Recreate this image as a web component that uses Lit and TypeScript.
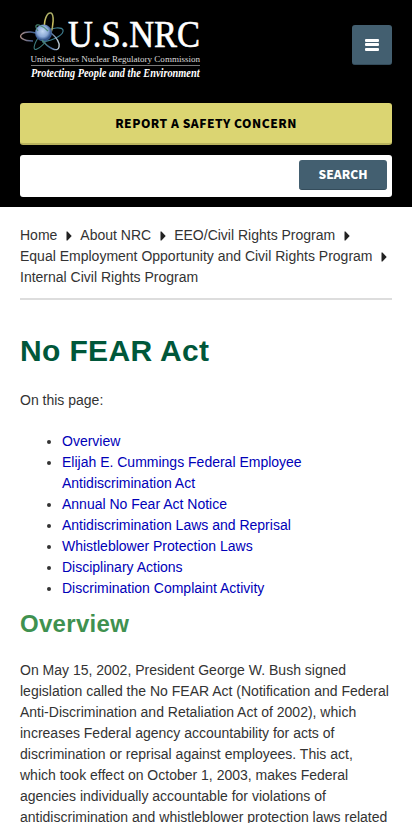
import { LitElement, html, css, svg } from "lit";
import { customElement } from "lit/decorators.js";

const crumbs = ["Home", "About NRC", "EEO/Civil Rights Program", "Equal Employment Opportunity and Civil Rights Program"];
const links = [
  "Overview",
  "Elijah E. Cummings Federal Employee Antidiscrimination Act",
  "Annual No Fear Act Notice",
  "Antidiscrimination Laws and Reprisal",
  "Whistleblower Protection Laws",
  "Disciplinary Actions",
  "Discrimination Complaint Activity",
];

@customElement("nrc-logo")
export class NrcLogo extends LitElement {
  static styles = css`
    :host { display: block; width: 182px; height: 72px; }
    svg { display: block; overflow: visible; }
    text { font-family: "Liberation Serif", serif; fill: #fff; }
    .name { font-size: 38px; stroke: #fff; stroke-width: 0.6; }
    .full { font-size: 9px; fill: #ddd; }
    .motto { font-size: 11.5px; font-style: italic; font-weight: bold; }
  `;
  render() {
    return html`<svg width="182" height="72" viewBox="20 10 182 72">
      <defs>
        <radialGradient id="ball" cx="45%" cy="40%">
          <stop offset="0" stop-color="#c3d8f4" />
          <stop offset="0.65" stop-color="#8aa8d6" />
          <stop offset="1" stop-color="#35568e" />
        </radialGradient>
        <linearGradient id="gold" x1="0" x2="0" y1="0" y2="1">
          <stop offset="0" stop-color="#a9ad69" />
          <stop offset="0.5" stop-color="#d2c45e" />
          <stop offset="1" stop-color="#56737e" />
        </linearGradient>
        <linearGradient id="rose" x1="0" x2="1">
          <stop offset="0" stop-color="#ac8d86" />
          <stop offset="0.5" stop-color="#455d8b" />
          <stop offset="1" stop-color="#4faab7" />
        </linearGradient>
        <linearGradient id="mint" x1="0" x2="1">
          <stop offset="0" stop-color="#4c8a75" />
          <stop offset="0.5" stop-color="#466798" />
          <stop offset="1" stop-color="#c6d2dc" />
        </linearGradient>
      </defs>
      ${svg`
        <path d="M33 41C23 41 18 37 22 34C25 31 35 31 44 36" fill="none" stroke="url(#rose)" stroke-width="1.4"/>
        <path d="M44 32C52 27 62 27 63 30C64 34 56 40 42 42" fill="none" stroke="#3f7f91" stroke-width="1.2"/>
        <path d="M45 31C43 21 47 12 51 13C54 14 54 26 50 36" fill="none" stroke="url(#gold)" stroke-width="1.5"/>
        <path d="M38 38C33 46 33 51 37 49C40 48 45 43 50 36" fill="none" stroke="#3d7b7d" stroke-width="1.1"/>
        <circle cx="43.5" cy="33" r="8.5" fill="url(#ball)"/>
        <path d="M38 31C35 27 35 24 39 25C42 26 45 28 48 31" fill="none" stroke="#4c8a75" stroke-width="1.2"/>
        <path d="M50 32C56 37 60 43 59 47C58 53 48 48 42 40" fill="none" stroke="url(#mint)" stroke-width="1.4"/>
      `}
      <text class="name" x="68" y="47" textLength="132" lengthAdjust="spacingAndGlyphs">U.S.NRC</text>
      <text class="full" x="30.5" y="61.5" textLength="169.5" lengthAdjust="spacingAndGlyphs">United States Nuclear Regulatory Commission</text>
      <line x1="31" x2="200" y1="65.5" y2="65.5" stroke="#777" />
      <text class="motto" x="31" y="77" textLength="168.5" lengthAdjust="spacingAndGlyphs">Protecting People and the Environment</text>
    </svg>`;
  }
}

@customElement("app-root")
export class AppRoot extends LitElement {
  static styles = css`
    :host {
      display: block;
      height: 823px;
      overflow: hidden;
      background: #fff;
      color: #333;
      font: 14px/21px "Liberation Sans", Arial, sans-serif;
    }
    * { box-sizing: border-box; }
    header { background: #000; height: 207px; padding: 10px 20px; display: flex; flex-direction: column; }
    .top { display: flex; justify-content: space-between; height: 93px; }
    button {
      display: block;
      border: 0;
      border-radius: 3px;
      padding: 0;
      font: 900 12px/20px "Noto Sans CJK JP", sans-serif;
      text-transform: uppercase;
    }
    .menu {
      width: 40px; height: 40px; margin-top: 15px;
      display: flex; flex-direction: column; align-items: center; justify-content: center; gap: 1.5px;
      background: #435f70; border-bottom: 1px solid #344c5b;
    }
    .bar { width: 14px; height: 3px; border-radius: 1px; background: #fff; }
    .report { width: 100%; height: 42px; flex: none; background: #dbd572; color: #000; letter-spacing: 0.5px; border-bottom: 2px solid #b9b35d; }
    .search { height: 42px; margin-top: 10px; flex: none; padding: 5px; background: #fff; border-radius: 3px; display: flex; justify-content: flex-end; }
    .go { width: 88px; height: 30px; padding-bottom: 2px; background: #435f70; color: #fff; letter-spacing: 0; border-bottom: 1px solid #344c5b; }
    main { padding: 18px 20px 0; }
    nav { display: flex; flex-wrap: wrap; column-gap: 8.5px; padding-bottom: 10px; border-bottom: 2px solid #ddd; }
    .crumb { display: flex; align-items: center; gap: 8.5px; white-space: nowrap; }
    .sep { width: 6px; height: 10px; fill: #222; }
    h1 { margin: 30px 0 18px; font-size: 30px; line-height: 42px; letter-spacing: 0.35px; color: #00573a; }
    p { margin: 0; }
    ul { margin: 20px 0 0; padding: 0 40px 0 42px; }
    a { color: #0000b8; text-decoration: none; }
    h2 { margin: 8px 0 19px; font-size: 24px; line-height: 34px; letter-spacing: 0.3px; color: #3f9150; }
  `;
  render() {
    return html`
      <header>
        <div class="top">
          <nrc-logo></nrc-logo>
          <button class="menu" aria-label="Menu">
            <span class="bar"></span><span class="bar"></span><span class="bar"></span>
          </button>
        </div>
        <button class="report">Report a Safety Concern</button>
        <div class="search"><button class="go">Search</button></div>
      </header>
      <main>
        <nav>
          ${crumbs.map((c) => html`<span class="crumb">${c}<svg class="sep" viewBox="0 0 6 10"><path d="M0.5 0.5H1.5L5.7 5L1.5 9.5H0.5Z" /></svg></span>`)}
          <span class="crumb">Internal Civil Rights Program</span>
        </nav>
        <h1>No FEAR Act</h1>
        <p>On this page:</p>
        <ul>${links.map((l) => html`<li><a>${l}</a></li>`)}</ul>
        <h2>Overview</h2>
        <p>
          On May 15, 2002, President George W. Bush signed legislation called the No FEAR Act
          (Notification and Federal Anti-Discrimination and Retaliation Act of 2002), which increases
          Federal agency accountability for acts of discrimination or reprisal against employees. This
          act, which took effect on October 1, 2003, makes Federal agencies individually accountable for
          violations of antidiscrimination and whistleblower protection laws related
        </p>
      </main>
    `;
  }
}
